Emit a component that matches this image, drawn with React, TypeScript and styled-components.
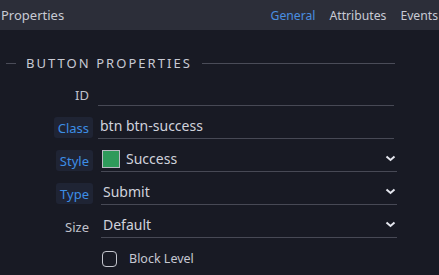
import React from 'react';
import styled, { createGlobalStyle } from 'styled-components';

const Global = createGlobalStyle`
  body {
    margin: 0;
    background: #181a24;
    font-family: "Noto Sans", "Open Sans", sans-serif;
    overflow: hidden;
  }
`;

const Panel = styled.div`
  width: 439px;
  height: 275px;
  background: #181a24;
  color: #c6c8d2;
`;

const Header = styled.div`
  height: 30px;
  background: #2c2e39;
  display: flex;
  align-items: center;
  justify-content: space-between;
  font-size: 13px;
  overflow: hidden;
  white-space: nowrap;
`;

const Title = styled.div`
  padding-left: 1px;
  color: #c8cad4;
`;

const Tabs = styled.div`
  display: flex;
  gap: 14px;
  margin-right: 1px;
  font-size: 12.2px;
`;

const Tab = styled.div<{ $active?: boolean }>`
  color: ${(p) => (p.$active ? '#4a8fe0' : '#c8cad4')};
`;

const Heading = styled.div`
  display: flex;
  align-items: center;
  height: 32px;
  margin-top: 17px;
  width: 395px;
  padding-left: 6px;
  box-sizing: border-box;
  font-size: 13px;
  letter-spacing: 2.05px;
  color: #c8cad4;

  &::before {
    content: '';
    width: 10px;
    height: 1px;
    background: #4a4c58;
    margin-right: 10px;
  }
  &::after {
    content: '';
    flex: 1;
    height: 1px;
    background: #4a4c58;
    margin-left: 10px;
  }
`;

const Rows = styled.div`
  display: flex;
  flex-direction: column;
  margin-top: -6px;
`;

const Row = styled.div`
  display: grid;
  grid-template-columns: 93px 1fr;
  align-items: end;
  height: 33px;
`;

const LabelCell = styled.div`
  display: flex;
  justify-content: flex-end;
  padding-bottom: 1px;
`;

const Label = styled.span<{ $active?: boolean }>`
  display: inline-flex;
  align-items: center;
  height: 21px;
  padding: 0 4px;
  border-radius: 3px;
  font-size: 13px;
  color: ${(p) => (p.$active ? '#3d8ee6' : '#c0c2cc')};
  background: ${(p) => (p.$active ? '#1f2434' : 'transparent')};
`;

const Field = styled.div<{ $select?: boolean }>`
  display: flex;
  align-items: center;
  gap: 6px;
  margin-left: ${(p) => (p.$select ? '8px' : '5px')};
  width: 296px;
  height: 26px;
  padding-left: 2px;
  box-sizing: border-box;
  border-bottom: 1px solid #474955;
  font-size: 14px;
  color: #d0d2dc;
`;

const Value = styled.span`
  flex: 1;
`;

const Swatch = styled.span<{ $color: string }>`
  width: 16px;
  height: 16px;
  margin-left: -1px;
  border: 1px solid #b8bac2;
  background: ${(p) => p.$color};
`;

const Chevron = () => (
  <svg width="11" height="7" viewBox="0 0 11 7" style={{ marginRight: 1 }}>
    <polyline points="1.5,1.5 5.5,5 9.5,1.5" fill="none" stroke="#e4e6ee" strokeWidth="2" />
  </svg>
);

const CheckRow = styled.label`
  display: flex;
  align-items: center;
  gap: 12px;
  margin: 12px 0 0 102px;
  font-size: 12.5px;
  color: #c6c8d2;
`;

const Box = styled.span`
  width: 13px;
  height: 14px;
  border: 1.5px solid #c4c6ce;
  border-radius: 4px;
`;

const App = () => {
  return (
    <Panel>
      <Global />
      <Header>
        <Title>Properties</Title>
        <Tabs>
          <Tab $active>General</Tab>
          <Tab>Attributes</Tab>
          <Tab>Events</Tab>
        </Tabs>
      </Header>
      <Heading>BUTTON PROPERTIES</Heading>
      <Rows>
        <Row>
          <LabelCell><Label>ID</Label></LabelCell>
          <Field />
        </Row>
        <Row>
          <LabelCell><Label $active>Class</Label></LabelCell>
          <Field><Value>btn btn-success</Value></Field>
        </Row>
        <Row>
          <LabelCell><Label $active>Style</Label></LabelCell>
          <Field $select>
            <Swatch $color="#2e9a5a" />
            <Value>Success</Value>
            <Chevron />
          </Field>
        </Row>
        <Row>
          <LabelCell><Label $active>Type</Label></LabelCell>
          <Field $select>
            <Value>Submit</Value>
            <Chevron />
          </Field>
        </Row>
        <Row>
          <LabelCell><Label>Size</Label></LabelCell>
          <Field $select>
            <Value>Default</Value>
            <Chevron />
          </Field>
        </Row>
      </Rows>
      <CheckRow>
        <Box />
        Block Level
      </CheckRow>
    </Panel>
  );
};

export default App;
